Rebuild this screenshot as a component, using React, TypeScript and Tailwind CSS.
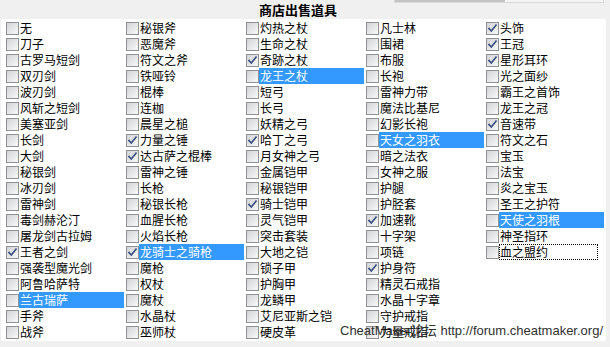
import React from "react";

type Item = { t: string; c?: boolean; h?: boolean; f?: boolean };

const cols: Item[][] = [
  [
    { t: "无" }, { t: "刀子" }, { t: "古罗马短剑" }, { t: "双刃剑" }, { t: "波刃剑" },
    { t: "风斩之短剑" }, { t: "美塞亚剑" }, { t: "长剑" }, { t: "大剑" }, { t: "秘银剑" },
    { t: "冰刃剑" }, { t: "雷神剑" }, { t: "毒剑赫沦汀" }, { t: "屠龙剑古拉姆" }, { t: "王者之剑", c: true },
    { t: "强袭型魔光剑" }, { t: "阿鲁哈萨特" }, { t: "兰古瑞萨", h: true }, { t: "手斧" }, { t: "战斧" },
  ],
  [
    { t: "秘银斧" }, { t: "恶魔斧" }, { t: "符文之斧" }, { t: "铁哑铃" }, { t: "棍棒" },
    { t: "连枷" }, { t: "晨星之槌" }, { t: "力量之锤", c: true }, { t: "达古萨之棍棒", c: true }, { t: "雷神之锤" },
    { t: "长枪" }, { t: "秘银长枪" }, { t: "血腥长枪" }, { t: "火焰长枪" }, { t: "龙骑士之骑枪", c: true, h: true },
    { t: "魔枪" }, { t: "权杖" }, { t: "魔杖" }, { t: "水晶杖" }, { t: "巫师杖" },
  ],
  [
    { t: "灼热之杖" }, { t: "生命之杖" }, { t: "奇跡之杖", c: true }, { t: "龙王之杖", h: true }, { t: "短弓" },
    { t: "长弓" }, { t: "妖精之弓" }, { t: "哈丁之弓", c: true }, { t: "月女神之弓" }, { t: "金属铠甲" },
    { t: "秘银铠甲" }, { t: "骑士铠甲", c: true }, { t: "灵气铠甲" }, { t: "突击套装" }, { t: "大地之铠" },
    { t: "锁子甲" }, { t: "护胸甲" }, { t: "龙鳞甲" }, { t: "艾尼亚斯之铠" }, { t: "硬皮革" },
  ],
  [
    { t: "凡士林" }, { t: "围裙" }, { t: "布服" }, { t: "长袍" }, { t: "雷神力带" },
    { t: "魔法比基尼" }, { t: "幻影长袍" }, { t: "天女之羽衣", h: true }, { t: "暗之法衣" }, { t: "女神之服" },
    { t: "护腿" }, { t: "护胫套" }, { t: "加速靴", c: true }, { t: "十字架" }, { t: "项链" },
    { t: "护身符", c: true }, { t: "精灵石戒指" }, { t: "水晶十字章" }, { t: "守护戒指" }, { t: "力量戒指" },
  ],
  [
    { t: "头饰", c: true }, { t: "王冠", c: true }, { t: "星形耳环", c: true }, { t: "光之面纱" }, { t: "霸王之首饰" },
    { t: "龙王之冠" }, { t: "音速带", c: true }, { t: "符文之石" }, { t: "宝玉" }, { t: "法宝" },
    { t: "炎之宝玉" }, { t: "圣王之护符" }, { t: "天使之羽根", h: true }, { t: "神圣指环" }, { t: "血之盟约", f: true },
  ],
];

function Box({ checked }: { checked?: boolean }) {
  return (
    <div className="mt-[2px] w-[13px] h-[13px] shrink-0 border border-[#8f9194] bg-linear-to-br from-[#d2d3d5] to-[#fafafa] flex items-center justify-center">
      {checked && (
        <svg width="11" height="11" viewBox="0 0 11 11">
          <path d="M2 5.5 L4.3 8 L9 2.2" fill="none" stroke="#3d4f80" strokeWidth="1.7" strokeLinecap="square" />
        </svg>
      )}
    </div>
  );
}

export default function App() {
  return (
    <div className="relative w-[610px] h-[347px] overflow-hidden bg-[#f0f0f0] font-['Noto_Sans_CJK_SC',sans-serif] text-black">
      <div className="absolute left-[394px] top-[-3px] w-[210px] h-[6px] border border-[#d9d9d9] bg-[#f4f4f4]">
        <div className="w-[110px] h-full bg-[#c4c4c4]" />
      </div>
      <div className="h-[19px] flex items-center pl-[259px] text-[13px] font-bold leading-[19px]">
        商店出售道具
      </div>
      <div className="ml-[1px] w-[605px] h-[322px] bg-white pl-[5px] pt-[1px] flex">
        {cols.map((col, ci) => (
          <div key={ci} className="w-[120px] flex flex-col">
            {col.map((it, ri) => (
              <div key={ri} className="h-[16px] flex items-start">
                <Box checked={it.c} />
                <div
                  className={
                    it.h
                      ? "w-[105px] h-[16px] leading-[16px] text-[12px] pl-[1px] bg-[#3399ff] text-white whitespace-nowrap"
                      : it.f
                      ? "w-[99px] h-[16px] leading-[14px] text-[12px] border border-dotted border-black whitespace-nowrap"
                      : "w-[105px] h-[16px] leading-[16px] text-[12px] pl-[1px] whitespace-nowrap"
                  }
                >
                  {it.t}
                </div>
              </div>
            ))}
          </div>
        ))}
      </div>
      <div className="absolute left-[340px] top-[323px] text-[13px] leading-[16px] text-[#303030] font-['Liberation_Sans','Noto_Sans_CJK_SC',sans-serif] whitespace-nowrap">
        CheatMaker论坛 http://forum.cheatmaker.org/
      </div>
    </div>
  );
}
